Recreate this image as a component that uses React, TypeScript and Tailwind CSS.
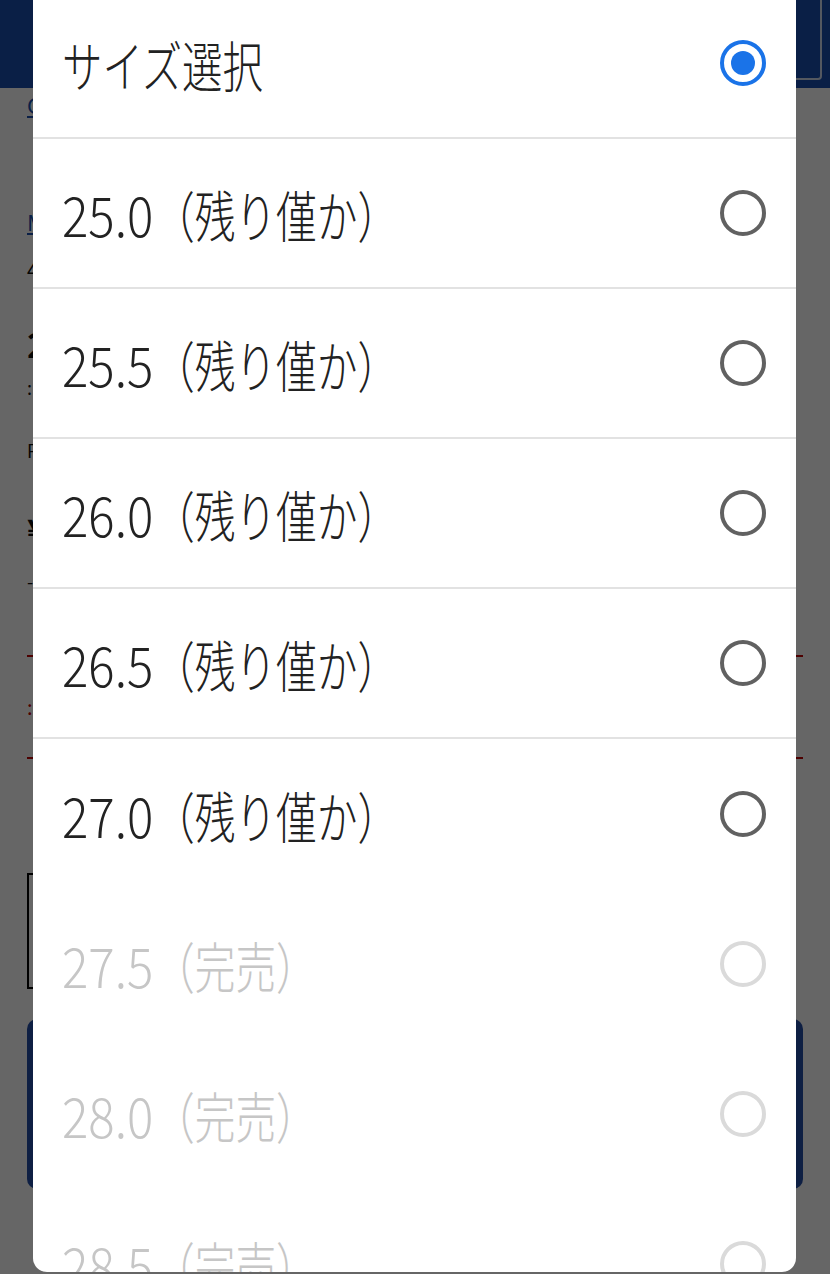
import React from "react";

type Opt = { label: string; note?: string; state: "selected" | "normal" | "disabled"; divider: boolean };

const options: Opt[] = [
  { label: "サイズ選択", state: "selected", divider: true },
  { label: "25.0", note: "（残り僅か）", state: "normal", divider: true },
  { label: "25.5", note: "（残り僅か）", state: "normal", divider: true },
  { label: "26.0", note: "（残り僅か）", state: "normal", divider: true },
  { label: "26.5", note: "（残り僅か）", state: "normal", divider: true },
  { label: "27.0", note: "（残り僅か）", state: "normal", divider: false },
  { label: "27.5", note: "（完売）", state: "disabled", divider: false },
  { label: "28.0", note: "（完売）", state: "disabled", divider: false },
  { label: "28.5", note: "（完売）", state: "disabled", divider: false },
];

function Radio({ state }: { state: Opt["state"] }) {
  if (state === "selected") {
    return (
      <div className="flex h-[46px] w-[46px] shrink-0 items-center justify-center rounded-full border-[4px] border-[#1a73e8]">
        <div className="h-[24px] w-[24px] rounded-full bg-[#1a73e8]" />
      </div>
    );
  }
  return (
    <div
      className={
        state === "disabled"
          ? "h-[46px] w-[46px] shrink-0 rounded-full border-[4px] border-[#dadada]"
          : "h-[46px] w-[46px] shrink-0 rounded-full border-[4px] border-[#616161]"
      }
    />
  );
}

export default function App() {
  return (
    <div className="relative h-[1274px] w-[830px] overflow-hidden font-['Noto_Sans_CJK_JP','Noto_Sans',sans-serif]">
      {/* underlying page */}
      <div className="h-full bg-white">
        <header className="flex h-[88px] items-end justify-end bg-[#1a4fb0] pb-[8px] pr-[8px]">
          <div className="h-[84px] w-[160px] rounded-[4px] border-2 border-white/80" />
        </header>
        <main className="px-[27px] text-[#111]">
          <p className="mt-[2px] text-[22px] leading-[28px] text-[#1a4fb0] underline">Gカテゴリ一覧へ戻る</p>
          <p className="mt-[88px] text-[22px] leading-[30px] text-[#1a4fb0] underline">Mメーカー</p>
          <p className="mt-[20px] text-[20px] leading-[28px]">4 ブランド名</p>
          <p className="mt-[40px] text-[34px] font-bold leading-[40px]">2 商品名テキスト</p>
          <p className="mt-[10px] text-[18px] leading-[26px]">: 品番 000000</p>
          <p className="mt-[37px] text-[18px] leading-[26px]">P ポイント</p>
          <p className="mt-[45px] text-[30px] font-bold leading-[40px]">¥ 12,000</p>
          <p className="mt-[20px] text-[18px] leading-[26px]">- 税込</p>
          <div className="mt-[61px] border-t-2 border-[#c00000]" />
          <p className="py-[24px] text-[20px] leading-[52px] text-[#c00000]">: 在庫状況のお知らせ</p>
          <div className="border-t-2 border-[#c00000]" />
          <div className="mt-[114px] h-[116px] w-[220px] border-2 border-black" />
          <div className="mt-[30px] h-[170px] rounded-[10px] bg-[#254fa8]" />
        </main>
      </div>

      {/* overlay */}
      <div className="absolute inset-0 bg-black/60" />

      {/* dialog */}
      <div className="absolute left-[33px] top-[-11px] h-[1283px] w-[763px] overflow-hidden rounded-b-[14px] bg-white">
        {options.map((o, i) => (
          <div
            key={i}
            className={
              "flex h-[150px] items-center justify-between pl-[29px] pr-[30px] " +
              (o.divider ? "border-b-2 border-[#e2e2e2]" : "")
            }
          >
            <div
              className={
                "flex items-center whitespace-nowrap text-[55px] font-light leading-none " +
                (o.state === "disabled" ? "text-[#c6c6c6]" : "text-[#222222]")
              }
            >
              {o.note ? (
                <>
                  <span className="inline-block w-[92px]">
                    <span className="inline-block origin-left scale-x-[0.895]">{o.label}</span>
                  </span>
                  <span className="inline-block origin-left scale-x-[0.74]">{o.note}</span>
                </>
              ) : (
                <span className="inline-block origin-left scale-x-[0.735]">{o.label}</span>
              )}
            </div>
            <Radio state={o.state} />
          </div>
        ))}
      </div>
    </div>
  );
}
